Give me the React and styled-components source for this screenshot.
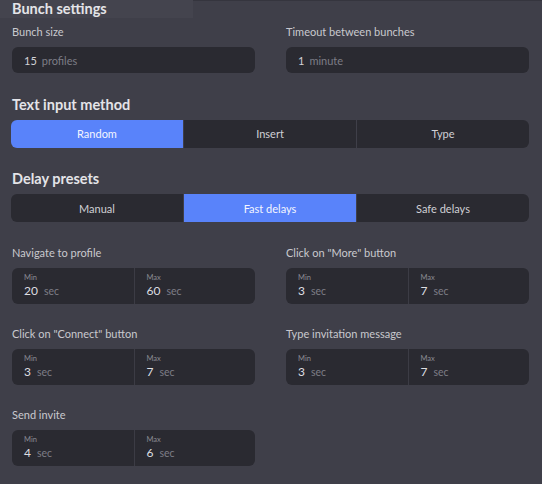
import React from "react";
import styled, { createGlobalStyle } from "styled-components";

const GlobalStyle = createGlobalStyle`
  html, body {
    margin: 0;
    background: #3f3f49;
  }
  body {
    font-family: Lato, "Noto Sans", "Liberation Sans", sans-serif;
    color: #d6d6da;
  }
`;

const Page = styled.div`
  padding: 0 13px 20px 12px;
  border-top: 1px solid #35353e;
`;

const TopStrip = styled.div`
  margin-left: -12px;
  padding-left: 12px;
  width: 181px;
  background: #44444e;
`;

const Heading = styled.h2`
  margin: ${(p) => (p.$first ? "-1px 0 7px" : "22.5px 0 6px")};
  font-size: 14.5px;
  line-height: 18px;
  font-weight: 700;
  color: #e4e4e8;
`;

const Grid = styled.div`
  display: grid;
  grid-template-columns: 1fr 1fr;
  column-gap: 31px;
  row-gap: 23px;
  margin-top: ${(p) => p.$mt || 0}px;
`;

const Field = styled.div`
  display: flex;
  flex-direction: column;
`;

const Label = styled.span`
  font-size: 11px;
  line-height: 14px;
  margin-bottom: 8px;
  color: #c9c9ce;
`;

const InputBox = styled.div`
  display: flex;
  align-items: center;
  gap: 5px;
  height: 26px;
  padding: 0 12px;
  border-radius: 6px;
  background: #2a2a31;
  font-size: 11px;
`;

const Value = styled.span`
  color: ${(p) => (p.$big ? "#dedee2" : "#d2d2d6")};
  font-size: ${(p) => (p.$big ? "12px" : "11px")};
`;

const Unit = styled.span`
  color: #7d7d86;
  font-size: ${(p) => (p.$big ? "10.5px" : "11px")};
`;

const Segmented = styled.div`
  display: grid;
  grid-template-columns: repeat(3, 1fr);
  gap: 1px;
  height: 28px;
  margin-left: -1px;
  border-radius: 6px;
  overflow: hidden;
`;

const Segment = styled.button`
  border: 0;
  padding: 0;
  font-family: inherit;
  font-size: 11px;
  color: ${(p) => (p.$active ? "#f4f6ff" : "#d0d0d5")};
  background: ${(p) => (p.$active ? "#5983fa" : "#2a2a31")};
  cursor: pointer;
`;

const RangeBox = styled.div`
  display: grid;
  grid-template-columns: 1fr 1fr;
  height: 36px;
  border-radius: 6px;
  background: #2a2a31;
  overflow: hidden;
`;

const RangeHalf = styled.div`
  display: flex;
  flex-direction: column;
  justify-content: center;
  padding: 0 12px;
  border-left: ${(p) => (p.$right ? "1px solid #3c3c45" : "0")};
`;

const Tiny = styled.span`
  font-size: 7.5px;
  line-height: 9px;
  color: #8b8b93;
  margin-bottom: 1px;
`;

const ValueRow = styled.div`
  display: flex;
  align-items: baseline;
  gap: 6px;
  line-height: 15px;
`;

const SegmentGroup = ({ options, active }) => (
  <Segmented>
    {options.map((o) => (
      <Segment key={o} $active={o === active}>
        {o}
      </Segment>
    ))}
  </Segmented>
);

const Range = ({ label, min, max }) => (
  <Field>
    <Label>{label}</Label>
    <RangeBox>
      <RangeHalf>
        <Tiny>Min</Tiny>
        <ValueRow>
          <Value $big>{min}</Value>
          <Unit $big>sec</Unit>
        </ValueRow>
      </RangeHalf>
      <RangeHalf $right>
        <Tiny>Max</Tiny>
        <ValueRow>
          <Value $big>{max}</Value>
          <Unit $big>sec</Unit>
        </ValueRow>
      </RangeHalf>
    </RangeBox>
  </Field>
);

const delays = [
  { label: "Navigate to profile", min: 20, max: 60 },
  { label: 'Click on "More" button', min: 3, max: 7 },
  { label: 'Click on "Connect" button', min: 3, max: 7 },
  { label: "Type invitation message", min: 3, max: 7 },
  { label: "Send invite", min: 4, max: 6 },
];

export default function App() {
  return (
    <>
      <GlobalStyle />
      <Page>
        <TopStrip>
          <Heading $first>Bunch settings</Heading>
        </TopStrip>
        <Grid>
          <Field>
            <Label>Bunch size</Label>
            <InputBox>
              <Value>15</Value>
              <Unit>profiles</Unit>
            </InputBox>
          </Field>
          <Field>
            <Label>Timeout between bunches</Label>
            <InputBox>
              <Value>1</Value>
              <Unit>minute</Unit>
            </InputBox>
          </Field>
        </Grid>

        <Heading>Text input method</Heading>
        <SegmentGroup options={["Random", "Insert", "Type"]} active="Random" />

        <Heading>Delay presets</Heading>
        <SegmentGroup
          options={["Manual", "Fast delays", "Safe delays"]}
          active="Fast delays"
        />

        <Grid $mt={23.5}>
          {delays.map((d) => (
            <Range key={d.label} {...d} />
          ))}
        </Grid>
      </Page>
    </>
  );
}
